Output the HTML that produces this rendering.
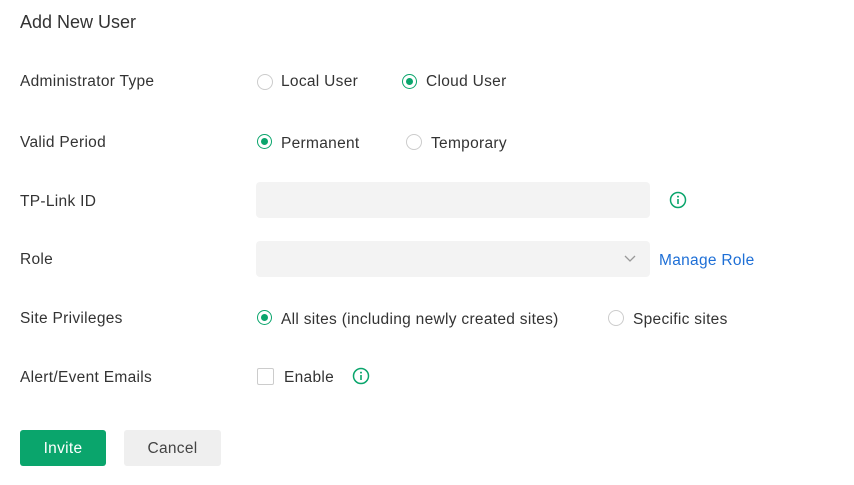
<!DOCTYPE html><html><head><style>
body{margin:0;width:854px;height:485px;background:#fff;font-family:"Liberation Sans",sans-serif;color:#333;font-size:15.5px;letter-spacing:0.3px;position:relative;overflow:hidden}
.a{position:absolute;white-space:nowrap;line-height:20px;margin-top:1px}
.r{position:absolute;width:14px;height:14px;border:1px solid #ccc;border-radius:50%;background:#fff}
.r.on{border:1.5px solid #0aa56c;width:13px;height:13px}
.r.on::after{content:"";position:absolute;left:3px;top:3px;width:7px;height:7px;border-radius:50%;background:#0aa56c}
.in{position:absolute;left:256px;width:394px;height:36px;background:#f3f3f3;border-radius:4px}
.i{position:absolute}
</style></head><body>
<div class="a" style="left:20px;top:11px;font-size:18px;letter-spacing:0">Add New User</div>
<div class="a" style="left:20px;top:71px">Administrator Type</div>
<div class="r" style="left:257px;top:74px"></div><div class="a" style="left:281px;top:71px">Local User</div>
<div class="r on" style="left:402px;top:74px"></div><div class="a" style="left:426px;top:71px">Cloud User</div>
<div class="a" style="left:20px;top:132px">Valid Period</div>
<div class="r on" style="left:257px;top:134px"></div><div class="a" style="left:281px;top:133px">Permanent</div>
<div class="r" style="left:406px;top:134px"></div><div class="a" style="left:431px;top:133px">Temporary</div>
<div class="a" style="left:20px;top:191px">TP-Link ID</div>
<div class="in" style="top:182px"></div>
<svg class="i" style="left:669px;top:191px" width="18" height="18"><circle cx="9" cy="9" r="7.5" fill="none" stroke="#0aa56c" stroke-width="1.5"/><circle cx="9" cy="5.6" r="1" fill="#0aa56c"/><path d="M9 8v5" stroke="#0aa56c" stroke-width="1.6"/></svg>
<div class="a" style="left:20px;top:249px">Role</div>
<div class="in" style="top:241px"></div>
<svg style="position:absolute;left:624px;top:255px" width="12" height="8"><path d="M1 1l5 5 5-5" fill="none" stroke="#999" stroke-width="1.3"/></svg>
<div class="a" style="left:659px;top:250px;color:#1e6fd6">Manage Role</div>
<div class="a" style="left:20px;top:308px">Site Privileges</div>
<div class="r on" style="left:257px;top:310px"></div><div class="a" style="left:281px;top:309px">All sites (including newly created sites)</div>
<div class="r" style="left:608px;top:310px"></div><div class="a" style="left:633px;top:309px">Specific sites</div>
<div class="a" style="left:20px;top:367px">Alert/Event Emails</div>
<div style="position:absolute;left:257px;top:368px;width:15px;height:15px;border:1px solid #ccc;border-radius:2px"></div>
<div class="a" style="left:284px;top:367px">Enable</div>
<svg class="i" style="left:352px;top:367px" width="18" height="18"><circle cx="9" cy="9" r="7.5" fill="none" stroke="#0aa56c" stroke-width="1.5"/><circle cx="9" cy="5.6" r="1" fill="#0aa56c"/><path d="M9 8v5" stroke="#0aa56c" stroke-width="1.6"/></svg>
<div style="position:absolute;left:20px;top:430px;width:86px;height:36px;background:#0aa56c;color:#fff;border-radius:3px;text-align:center;line-height:38px">Invite</div>
<div style="position:absolute;left:124px;top:430px;width:97px;height:36px;background:#efefef;color:#444;border-radius:3px;text-align:center;line-height:38px">Cancel</div>
</body></html>
